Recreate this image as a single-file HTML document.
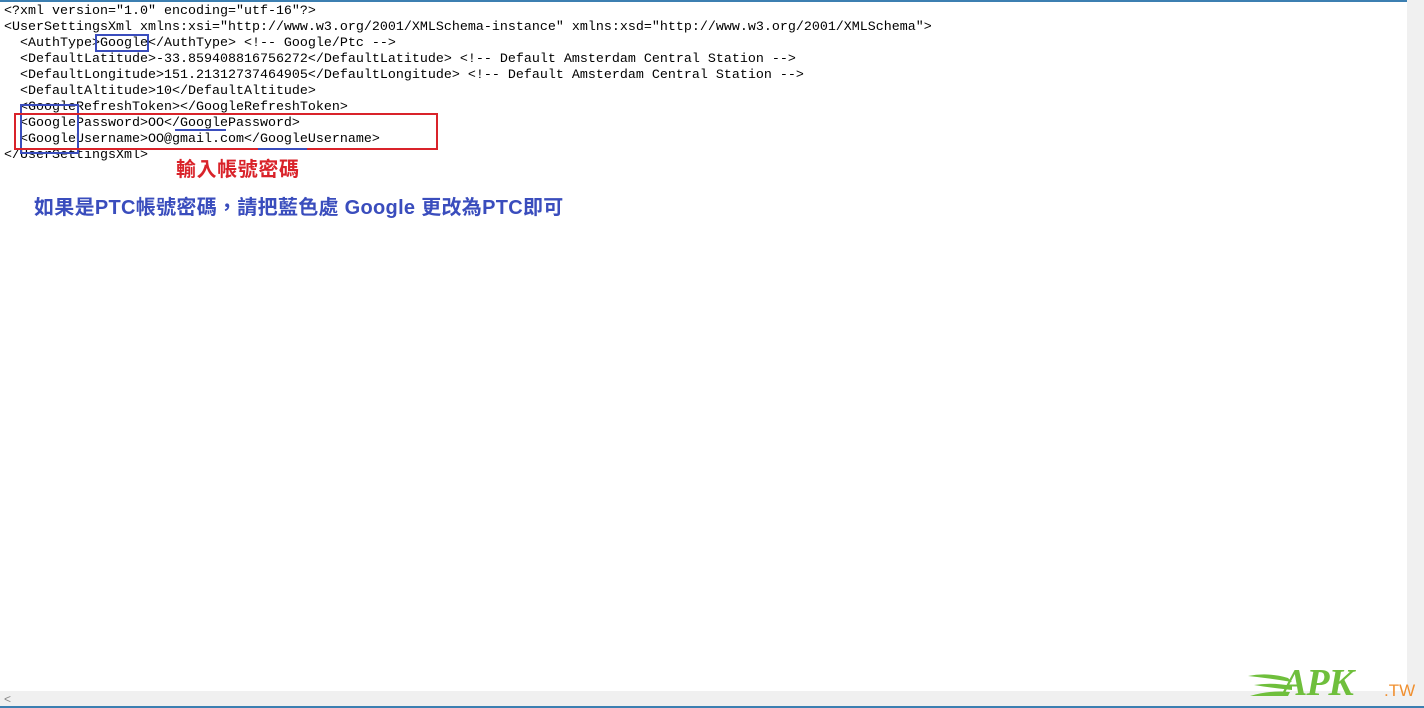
<!DOCTYPE html>
<html><head><meta charset="utf-8"><style>
body{margin:0;width:1424px;height:708px;background:#fff;position:relative;overflow:hidden}
pre{position:absolute;left:4px;top:4px;margin:0;font:13.33px/16px "Liberation Mono","Noto Serif CJK SC",monospace;color:#000;letter-spacing:0}
.b{position:absolute;box-sizing:border-box}
</style></head><body>
<div class="b" style="left:0;top:0;width:1424px;height:2px;background:#3c7fb1"></div>
<pre>&lt;?xml version="1.0" encoding="utf-16"?&gt;
&lt;UserSettingsXml xmlns:xsi="http://www.w3.org/2001/XMLSchema-instance" xmlns:xsd="http://www.w3.org/2001/XMLSchema"&gt;
  &lt;AuthType&gt;Google&lt;/AuthType&gt; &lt;!-- Google/Ptc --&gt;
  &lt;DefaultLatitude&gt;-33.859408816756272&lt;/DefaultLatitude&gt; &lt;!-- Default Amsterdam Central Station --&gt;
  &lt;DefaultLongitude&gt;151.21312737464905&lt;/DefaultLongitude&gt; &lt;!-- Default Amsterdam Central Station --&gt;
  &lt;DefaultAltitude&gt;10&lt;/DefaultAltitude&gt;
  &lt;GoogleRefreshToken&gt;&lt;/GoogleRefreshToken&gt;
  &lt;GooglePassword&gt;OO&lt;/GooglePassword&gt;
  &lt;GoogleUsername&gt;OO@gmail.com&lt;/GoogleUsername&gt;
&lt;/UserSettingsXml&gt;</pre>
<div class="b" style="left:95px;top:34px;width:54px;height:18px;border:2px solid #3a4dbd"></div>
<div class="b" style="left:20px;top:104px;width:59px;height:50px;border:2px solid #3a4dbd"></div>
<div class="b" style="left:14px;top:113px;width:424px;height:37px;border:2px solid #d9232a"></div>
<div class="b" style="left:175px;top:129px;width:51px;height:2px;background:#3a4dbd"></div>
<div class="b" style="left:258px;top:148px;width:49px;height:2px;background:#3a4dbd"></div>
<div class="b" style="left:176px;top:156px;font:bold 20px/24px 'Noto Sans CJK TC',sans-serif;color:#d9232a;letter-spacing:0.6px">輸入帳號密碼</div>
<div class="b" style="left:34px;top:195px;font:bold 20px/26px 'Liberation Sans','Noto Sans CJK TC',sans-serif;color:#3a4dbd;white-space:nowrap;letter-spacing:0.3px">如果是PTC帳號密碼，請把藍色處 Google 更改為PTC即可</div>
<div class="b" style="left:1407px;top:0;width:17px;height:708px;background:#f0f0f0"></div>
<div class="b" style="left:0;top:691px;width:1424px;height:17px;background:#f0f0f0;border-bottom:2px solid #3c7fb1"></div>
<div class="b" style="left:4px;top:691px;font:12px/17px 'Liberation Sans',sans-serif;color:#888">&lt;</div>
<svg class="b" style="left:1248px;top:668px" width="50" height="34"><g fill="#6fbf3c"><path d="M0 8 Q20 4 40 10 L44 14 Q20 10 0 8Z"/><path d="M6 17 Q24 14 44 18 L44 22 Q24 20 6 17Z"/><path d="M2 28 Q22 22 42 24 L40 28 Q20 28 2 28Z"/></g></svg>
<div class="b" style="left:1282px;top:664px;font:italic bold 38px/38px 'Liberation Serif',serif;color:#6fbf3c;letter-spacing:-1px">APK</div>
<div class="b" style="left:1384px;top:681px;font:17px/20px 'Liberation Sans',sans-serif;color:#f09030">.TW</div>
</body></html>
